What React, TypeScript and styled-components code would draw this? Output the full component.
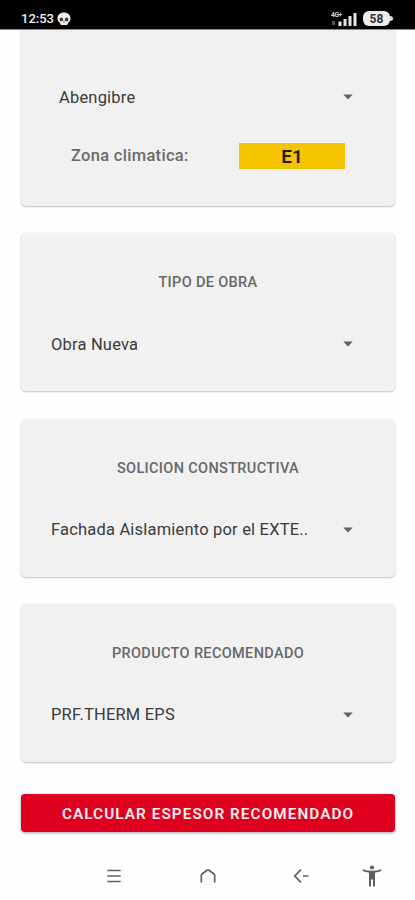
import React from 'react';
import styled, { createGlobalStyle } from 'styled-components';

const GlobalStyle = createGlobalStyle`
  * { box-sizing: border-box; }
  body { margin: 0; background: #fefefe; font-family: Roboto, sans-serif; }
`;

const Screen = styled.div`
  width: 415px;
  height: 900px;
  display: flex;
  flex-direction: column;
  overflow: hidden;
  background: #fefefe;
`;

const StatusBar = styled.header`
  height: 29px;
  flex: none;
  padding: 8px 22px 0 21px;
  display: flex;
  justify-content: space-between;
  background: #000;
  box-shadow: 0 1px 0 #8a8a8a;
  z-index: 1;
`;

const StatusGroup = styled.div`
  height: 21px;
  display: flex;
  align-items: center;
`;

const Clock = styled.span`
  font-size: 13px;
  font-weight: 500;
  line-height: 21px;
  color: #f2f2f2;
  margin-right: 3px;
`;

const Battery = styled.div`
  display: flex;
  align-items: center;
  margin-left: 5px;
  &::after {
    content: '';
    width: 3px;
    height: 5px;
    border-radius: 0 3px 3px 0;
    background: #d8d8d8;
  }
`;

const BatteryLevel = styled.span`
  width: 27px;
  height: 15px;
  border-radius: 6px;
  background: #ececec;
  color: #333;
  font-size: 12px;
  font-weight: 700;
  line-height: 16px;
  text-align: center;
`;

const Content = styled.main`
  flex: 1;
  display: flex;
  flex-direction: column;
  padding: 0 20px 0 21px;
`;

const Card = styled.section<{ $clipped?: boolean }>`
  flex: none;
  height: ${(p) => (p.$clipped ? 177 : 158)}px;
  margin-bottom: 27.3px;
  padding-top: ${(p) => (p.$clipped ? 56 : 38)}px;
  border-radius: ${(p) => (p.$clipped ? '0 0 5px 5px' : '5px')};
  background: #f1f1f1;
  box-shadow: 0 1px 2px rgba(0, 0, 0, 0.22), 0 0 2px rgba(0, 0, 0, 0.08);
`;

const Title = styled.h2`
  margin: 0 0 37px;
  height: 24px;
  line-height: 24px;
  font-size: 14.5px;
  font-weight: 500;
  letter-spacing: 0.35px;
  text-align: center;
  color: #686868;
`;

const Select = styled.div<{ $indent?: number }>`
  height: 24px;
  display: flex;
  align-items: center;
  justify-content: space-between;
  padding: 0 42px 0 ${(p) => p.$indent ?? 30}px;
`;

const Value = styled.span`
  font-size: 16.5px;
  line-height: 24px;
  letter-spacing: 0.19px;
  padding-top: 1px;
  white-space: nowrap;
  color: #3a3a3a;
`;

const ZoneRow = styled.div`
  display: flex;
  align-items: center;
  justify-content: space-between;
  height: 26px;
  margin-top: 34px;
  padding: 0 50px;
`;

const ZoneLabel = styled.span`
  font-size: 16.5px;
  font-weight: 500;
  line-height: 24px;
  letter-spacing: 0.3px;
  color: #6b6b6b;
`;

const ZoneBadge = styled.span`
  width: 106px;
  height: 26px;
  background: #f5c400;
  color: #1c1a0c;
  font-size: 19px;
  font-weight: 600;
  line-height: 28px;
  text-align: center;
`;

const CalculateButton = styled.button`
  flex: none;
  height: 38px;
  margin-top: 5px;
  padding: 2px 0 0;
  border: 0;
  border-radius: 4px;
  background: #df0020;
  box-shadow: 0 1px 3px rgba(0, 0, 0, 0.35);
  color: #fff0f1;
  font-family: inherit;
  font-size: 15.3px;
  font-weight: 600;
  line-height: 36px;
  letter-spacing: 1.07px;
  white-space: nowrap;
`;

const NavBar = styled.nav`
  flex: none;
  height: 48px;
  display: grid;
  grid-template-columns: 66px 122px 64px 78px;
  padding-left: 81px;
  align-items: center;
  justify-items: center;
`;

const Caret = () => (
  <svg width="10" height="6" viewBox="0 0 10 6">
    <path d="M0.3 0.4H9.7L5 5.6Z" fill="#616161" />
  </svg>
);

const FaceIcon = () => (
  <svg width="14" height="14" viewBox="0 0 14 14">
    <path d="M7 .5C11 .5 13.500 3 13.500 6.500c0 2-.8 3.200-2.200 4L10.200 13H3.800l-1.100-2.500C1.300 9.700.5 8.500.5 6.500.5 3 3 .5 7 .5Z" fill="#ededed" />
    <rect x="2.700" y="5.600" width="3.300" height="3.700" rx="1.500" fill="#3c3c3c" />
    <rect x="8" y="5.600" width="3.300" height="3.700" rx="1.500" fill="#3c3c3c" />
    <path d="M7 8v3" stroke="#777" strokeWidth="1" />
  </svg>
);

const SignalIcon = () => (
  <svg width="27" height="16" viewBox="0 0 27 16">
    <text x="0" y="6" fontSize="6.500" fontWeight="700" fill="#d8d8d8" textLength="11">4G+</text>
    <g fill="#e6e6e6">
      <rect x="1" y="10" width="3" height="4" fill="#555" />
      <rect x="7.500" y="10.500" width="3" height="4.500" />
      <rect x="12.500" y="8" width="3" height="7" />
      <rect x="17.500" y="5" width="3" height="10" />
      <rect x="22.500" y="2" width="3" height="13" />
    </g>
  </svg>
);

const strokeProps = { fill: 'none', stroke: '#606060', strokeWidth: 1.7 };

const MenuIcon = () => (
  <svg width="16" height="16" viewBox="0 0 16 16" {...strokeProps}>
    <path d="M1.300 2.500H14.700M1.300 8H14.700M1.300 13.500H14.700" />
  </svg>
);

const HomeIcon = () => (
  <svg width="18" height="16" viewBox="0 0 18 16" {...strokeProps}>
    <path d="M2.300 14.500V7.300Q2.300 6.500 3 6L8 2.200Q9 1.500 10 2.200L15 6Q15.700 6.500 15.700 7.300V14.500" />
  </svg>
);

const BackIcon = () => (
  <svg width="18" height="16" viewBox="0 0 18 16" {...strokeProps}>
    <path d="M9 1.700L2.800 8L9 14.300M11 8H16.500" />
  </svg>
);

const PersonIcon = () => (
  <svg width="20" height="24" viewBox="0 0 20 24" fill="#606060">
    <circle cx="10" cy="3.500" r="2.100" />
    <path d="M1 5.200Q10 8.200 19 5.200L19.300 6.900Q16.500 8 13 8.400V22.500H11V15.500H9V22.500H7V8.400Q3.500 8 .7 6.900Z" />
  </svg>
);

const sections = [
  { title: 'TIPO DE OBRA', value: 'Obra Nueva' },
  { title: 'SOLICION CONSTRUCTIVA', value: 'Fachada Aislamiento por el EXTE..' },
  { title: 'PRODUCTO RECOMENDADO', value: 'PRF.THERM EPS' },
];

export default function App() {
  return (
    <>
      <GlobalStyle />
      <Screen>
        <StatusBar>
          <StatusGroup>
            <Clock>12:53</Clock>
            <FaceIcon />
          </StatusGroup>
          <StatusGroup>
            <SignalIcon />
            <Battery>
              <BatteryLevel>58</BatteryLevel>
            </Battery>
          </StatusGroup>
        </StatusBar>
        <Content>
          <Card $clipped>
            <Select $indent={38}>
              <Value>Abengibre</Value>
              <Caret />
            </Select>
            <ZoneRow>
              <ZoneLabel>Zona climatica:</ZoneLabel>
              <ZoneBadge>E1</ZoneBadge>
            </ZoneRow>
          </Card>
          {sections.map((s) => (
            <Card key={s.title}>
              <Title>{s.title}</Title>
              <Select>
                <Value>{s.value}</Value>
                <Caret />
              </Select>
            </Card>
          ))}
          <CalculateButton>CALCULAR ESPESOR RECOMENDADO</CalculateButton>
        </Content>
        <NavBar>
          <MenuIcon />
          <HomeIcon />
          <BackIcon />
          <PersonIcon />
        </NavBar>
      </Screen>
    </>
  );
}
